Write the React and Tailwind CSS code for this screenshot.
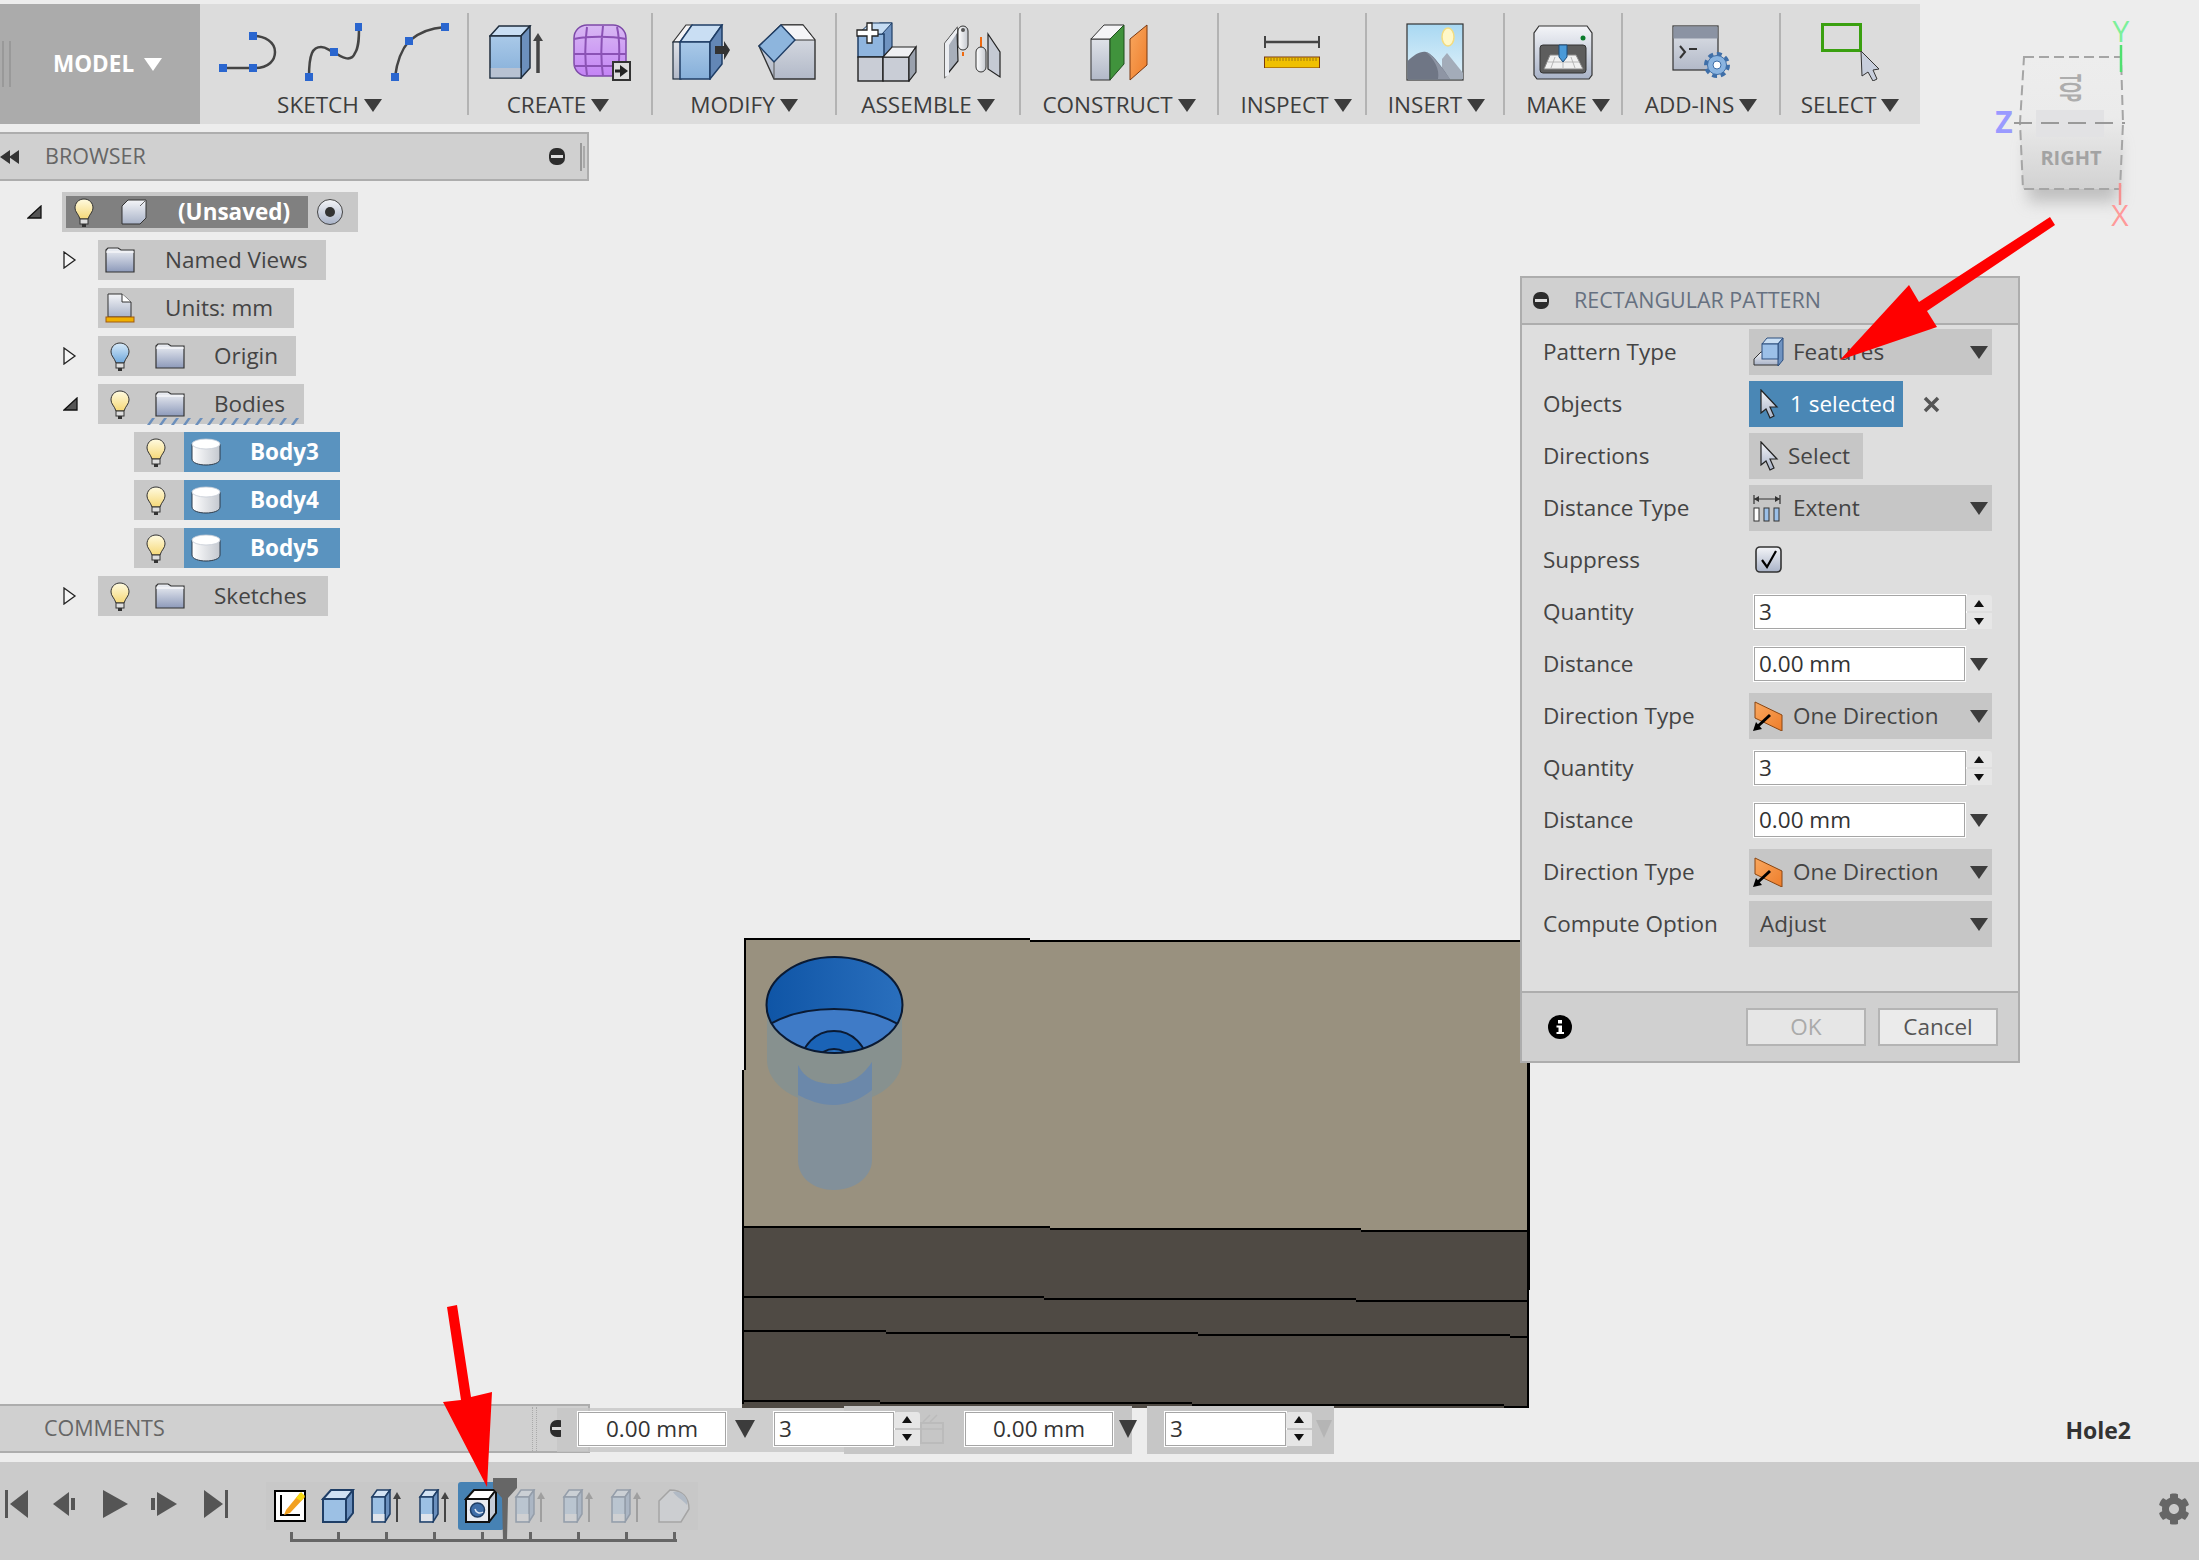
import { FaCog } from 'react-icons/fa';

const Defs = () => (
  <svg width="0" height="0" className="absolute">
    <defs>
      <linearGradient id="bulbY" x1="0" y1="0" x2="0" y2="1"><stop offset="0" stopColor="#fffbe0" /><stop offset="1" stopColor="#f5d878" /></linearGradient>
      <linearGradient id="bulbB" x1="0" y1="0" x2="0" y2="1"><stop offset="0" stopColor="#d8ebfa" /><stop offset="1" stopColor="#6fa8dc" /></linearGradient>
      <linearGradient id="steel" x1="0" y1="0" x2="0" y2="1"><stop offset="0" stopColor="#f4f5f8" /><stop offset="1" stopColor="#a9b3c8" /></linearGradient>
      <linearGradient id="folderG" x1="0" y1="0" x2="0" y2="1"><stop offset="0" stopColor="#eff1f5" /><stop offset="1" stopColor="#8d9aba" /></linearGradient>
      <linearGradient id="steel2" x1="0" y1="0" x2="0" y2="1"><stop offset="0" stopColor="#dfe2e8" /><stop offset="1" stopColor="#b2b9c8" /></linearGradient>
      <linearGradient id="blue" x1="0" y1="0" x2="0" y2="1"><stop offset="0" stopColor="#a9c9e8" /><stop offset="1" stopColor="#86afd9" /></linearGradient>
      <linearGradient id="cyl" x1="0" y1="0" x2="1" y2="0"><stop offset="0" stopColor="#fff" /><stop offset="1" stopColor="#c4c8cf" /></linearGradient>
      <linearGradient id="purple" x1="0" y1="0" x2="0" y2="1"><stop offset="0" stopColor="#d8b8f3" /><stop offset="1" stopColor="#c484f5" /></linearGradient>
      <linearGradient id="orange" x1="0" y1="0" x2="1" y2="1"><stop offset="0" stopColor="#f9a860" /><stop offset="1" stopColor="#ee7d2a" /></linearGradient>
      <linearGradient id="hole" x1="0" y1="0" x2="1" y2="0"><stop offset="0" stopColor="#0f55a6" /><stop offset="1" stopColor="#2a6fbd" /></linearGradient>
      <linearGradient id="cubeFace" x1="0" y1="0" x2="0" y2="1"><stop offset="0" stopColor="#ededed" /><stop offset="0.45" stopColor="#ebebeb" /><stop offset="1" stopColor="#d2d2d2" /></linearGradient>
      <linearGradient id="sky" x1="0" y1="0" x2="0" y2="1"><stop offset="0" stopColor="#a8d8f2" /><stop offset="1" stopColor="#e2f2fa" /></linearGradient>
      <clipPath id="holeClip"><ellipse cx="834.5" cy="1005" rx="68" ry="48" /></clipPath>
    </defs>
  </svg>
);

const Caret = ({ w = 18, h = 13, className = '', fill = '#3c3c3c' }) => (
  <svg width={w} height={h} viewBox="0 0 18 13" preserveAspectRatio="none" className={`shrink-0 ${className}`}>
    <polygon points="0,0 18,0 9,13" fill={fill} />
  </svg>
);

const Handle = ({ x, y }) => <rect x={x - 4} y={y - 4} width="8" height="8" fill="#2a66cf" />;

const SketchLine = () => (
  <svg width="58" height="40" viewBox="0 0 58 40">
    <path d="M4 36H36C50 36 56 28 56 20C56 10 46 4 34 4" fill="none" stroke="#444" strokeWidth="2.5" />
    <Handle x={4} y={36} /><Handle x={34} y={36} /><Handle x={34} y={4} />
  </svg>
);

const SketchSpline = () => (
  <svg width="57" height="58" viewBox="0 0 57 58">
    <path d="M4 54C4 30 8 24 16 24C22 24 24 28 29 29C36 34 46 40 50 30C54 24 54 14 54 4" fill="none" stroke="#444" strokeWidth="2.5" />
    <Handle x={4} y={54} /><Handle x={29} y={29} /><Handle x={54} y={4} />
  </svg>
);

const SketchArc = () => (
  <svg width="59" height="58" viewBox="0 0 59 58">
    <path d="M5 54C7 38 12 26 19 18C28 10 40 5 55 4" fill="none" stroke="#444" strokeWidth="2.5" />
    <Handle x={5} y={54} /><Handle x={19} y={18} /><Handle x={55} y={4} />
  </svg>
);

const Extrude = () => (
  <svg width="56" height="54" viewBox="0 0 56 54">
    <polygon points="1,11 10,1 41,1 32,11" fill="#c9def3" stroke="#1f2d3d" strokeWidth="1.5" />
    <polygon points="32,11 41,1 41,43 32,53" fill="#6c90bd" stroke="#1f2d3d" strokeWidth="1.5" />
    <rect x="1" y="11" width="31" height="42" fill="url(#blue)" stroke="#1f2d3d" strokeWidth="1.5" />
    <rect x="1.8" y="43" width="29.5" height="9.4" fill="#b8c2d2" />
    <path d="M49 48V12" stroke="#444" strokeWidth="3.5" />
    <polygon points="49,8 54,16 44,16" fill="#444" />
  </svg>
);

const Mesh = () => (
  <svg width="58" height="57" viewBox="0 0 58 57">
    <rect x="1" y="1" width="52" height="51" rx="13" fill="url(#purple)" stroke="#7d4aa8" strokeWidth="1.5" />
    <path d="M1 15C14 12 38 12 53 15M1 30H53M1 42H53M14 3C12 18 12 38 14 51M30 2C28 18 28 38 30 52M44 3C47 16 47 38 44 50" fill="none" stroke="#8b52b5" strokeWidth="2" />
    <rect x="40" y="38" width="17" height="18" fill="#ddd" stroke="#333" strokeWidth="2" />
    <path d="M42 47H48" stroke="#222" strokeWidth="3" />
    <polygon points="47,41 55,47 47,53" fill="#222" />
  </svg>
);

const PressPull = () => (
  <svg width="58" height="56" viewBox="0 0 58 56">
    <polygon points="1,18 14,1 20,1 8,18" fill="#f4f4f6" stroke="#333" strokeWidth="1.2" />
    <rect x="1" y="18" width="8" height="37" fill="url(#steel2)" stroke="#1f2d3d" strokeWidth="1.2" />
    <polygon points="8,18 20,1 50,1 38,18" fill="#c9def3" stroke="#1f3e66" strokeWidth="1.5" />
    <rect x="8" y="18" width="30" height="37" fill="url(#blue)" stroke="#1f3e66" strokeWidth="1.5" />
    <polygon points="38,18 50,1 50,40 38,55" fill="#6387b6" stroke="#1f3e66" strokeWidth="1.5" />
    <polygon points="43,22 52,22 52,17 58,26 52,36 52,30 43,30" fill="#333" />
  </svg>
);

const Chamfer = () => (
  <svg width="58" height="57" viewBox="0 0 58 57">
    <polygon points="1,22 16,55 57,55 57,16 45,1 23,1" fill="url(#steel2)" stroke="#333" strokeWidth="1.4" />
    <polygon points="23,1 45,1 57,16 37,16" fill="#f5f5f7" stroke="#333" strokeWidth="1" />
    <polygon points="1,22 23,1 37,16 16,38" fill="#8db5dd" stroke="#1f3e66" strokeWidth="1.4" />
    <path d="M16 38V55" stroke="#555" strokeWidth="1" />
  </svg>
);

const NewComp = () => (
  <svg width="61" height="60" viewBox="0 0 61 60">
    <polygon points="24,1 36,1 36,40 24,40" fill="#6f93c1" stroke="#1f3e66" strokeWidth="1.2" />
    <rect x="2" y="12" width="26" height="23" fill="#8fb5df" stroke="#1f3e66" strokeWidth="1.5" />
    <polygon points="2,12 14,1 36,1 26,12" fill="#c5dcf3" stroke="#1f3e66" strokeWidth="1" />
    <rect x="2" y="35" width="25" height="24" fill="#c9cdd6" stroke="#222" strokeWidth="1.4" />
    <rect x="27" y="35" width="26" height="24" fill="#c9cdd6" stroke="#222" strokeWidth="1.4" />
    <polygon points="27,35 36,25 60,25 53,35" fill="#eff0f3" stroke="#222" strokeWidth="1.2" />
    <polygon points="53,35 60,25 60,50 53,59" fill="#9aa1ad" stroke="#222" strokeWidth="1.2" />
    <path d="M11 1H16V8H22V14H16V21H11V14H1V8H11Z" fill="#fff" stroke="#222" strokeWidth="1.3" />
  </svg>
);

const Joint = () => (
  <svg width="57" height="54" viewBox="0 0 57 54">
    <polygon points="1,18 13,3 14,36 1,52" fill="#a8afba" stroke="#222" strokeWidth="1.2" />
    <polygon points="1,18 13,3 13,8 5,20 5,50 1,52" fill="#eceef2" />
    <rect x="14" y="1" width="10" height="24" rx="5" fill="url(#cyl)" stroke="#333" strokeWidth="1" />
    <circle cx="19" cy="5" r="2" fill="#555" />
    <path d="M19 27V31" stroke="#ef6a10" strokeWidth="2" />
    <path d="M37 12V23" stroke="#ef6a10" strokeWidth="2" />
    <rect x="32" y="22" width="10" height="25" rx="5" fill="url(#cyl)" stroke="#333" strokeWidth="1" />
    <polygon points="44,9 56,27 56,52 44,44" fill="#c5cad4" stroke="#222" strokeWidth="1.2" />
  </svg>
);

const Plane = () => (
  <svg width="58" height="57" viewBox="0 0 58 57">
    <rect x="1" y="15" width="19" height="41" fill="url(#steel2)" stroke="#333" strokeWidth="1" />
    <polygon points="1,15 14,1 34,1 20,15" fill="#f5f5f7" stroke="#333" strokeWidth="1" />
    <polygon points="20,15 34,1 34,40 20,56" fill="#40933c" stroke="#1f4d1d" strokeWidth="1" />
    <polygon points="40,15 57,1 57,41 40,56" fill="url(#orange)" stroke="#7a3810" strokeWidth="1" />
  </svg>
);

const Ruler = () => {
  const ticks = Array.from({ length: 17 }, (_, i) => i);
  return (
    <svg width="56" height="32" viewBox="0 0 56 32">
      <path d="M1 6H55" stroke="#444" strokeWidth="2.5" />
      <path d="M1 0V12M55 0V12" stroke="#444" strokeWidth="2" />
      <rect x="0.5" y="21" width="55" height="11" fill="#f0c000" stroke="#7a3a10" strokeWidth="1" />
      {ticks.map((i) => <path key={i} d={`M${4 + i * 3} 22V25`} stroke="#8a6410" strokeWidth="0.8" />)}
    </svg>
  );
};

const Picture = () => (
  <svg width="58" height="58" viewBox="0 0 58 58">
    <rect x="1" y="1" width="56" height="56" fill="url(#sky)" stroke="#333" strokeWidth="1.2" />
    <ellipse cx="42" cy="14" rx="6" ry="9" fill="#fff8c8" stroke="#f3dc80" strokeWidth="1.5" />
    <polygon points="36,56 36,36 41,30 57,50 57,56" fill="#a3acb9" />
    <path d="M1.6 56.4V38C8 32 14 28 20 29C26 30 36 44 44 56.4Z" fill="#6f7685" />
    <path d="M20 29C24 30 36 44 44 56H32C34 46 28 36 20 29Z" fill="#8e95a4" />
  </svg>
);

const Printer = () => (
  <svg width="60" height="55" viewBox="0 0 60 55">
    <path d="M6 1H54L59 8V50L56 54H4L1 50V8Z" fill="url(#steel)" stroke="#333" strokeWidth="1.2" />
    <circle cx="50" cy="13" r="2.5" fill="#0a7a2a" />
    <rect x="7" y="20" width="46" height="28" rx="3" fill="#5d5d5d" stroke="#333" />
    <polygon points="17,30 43,30 50,44 11,44" fill="#f0f0f0" stroke="#888" />
    <path d="M22 32L18 43M30 32V43M38 32L42 43M15 37H46" stroke="#aaa" strokeWidth="0.8" />
    <polygon points="26,20 34,20 34,32 30,37 26,32" fill="#4a9ad8" stroke="#1d4d7a" />
  </svg>
);

const AddIn = () => (
  <svg width="59" height="54" viewBox="0 0 59 54">
    <rect x="1" y="1" width="45" height="44" fill="url(#steel2)" stroke="#333" strokeWidth="1.2" />
    <rect x="1.5" y="1.5" width="44" height="12" fill="#8b93a3" />
    <path d="M8 21L13 27L8 33" fill="none" stroke="#333" strokeWidth="2" />
    <path d="M17 24H25" stroke="#333" strokeWidth="2" />
    <circle cx="45" cy="40" r="9" fill="none" stroke="#3f6fa8" strokeWidth="8" strokeDasharray="4 3" />
    <circle cx="45" cy="40" r="9.5" fill="#8ab4e0" stroke="#3f6fa8" strokeWidth="1" />
    <circle cx="45" cy="40" r="4" fill="#fff" stroke="#3f6fa8" strokeWidth="1" />
  </svg>
);

const SelectBox = () => (
  <svg width="59" height="58" viewBox="0 0 59 58">
    <rect x="1.5" y="1.5" width="38" height="26" fill="none" stroke="#3aa010" strokeWidth="3" />
    <polygon points="40,28 58,46 52,47 56,56 52,58 47,49 41,53" fill="#c7cedc" stroke="#333" strokeWidth="1" />
  </svg>
);

const Pointer = () => (
  <svg width="20" height="30" viewBox="0 0 20 30" className="shrink-0">
    <polygon points="2,1 18,18 11,18 15,27 11,29 7,20 2,24" fill="url(#steel)" stroke="#222" strokeWidth="1.2" />
  </svg>
);

const Bulb = ({ color = 'bulbY' }) => (
  <svg width="20" height="29" viewBox="0 0 20 29" className="shrink-0">
    <path d="M10 1C4.5 1 1 5 1 10C1 14 4.5 16 6 21H14C15.5 16 19 14 19 10C19 5 15.5 1 10 1Z" fill={`url(#${color})`} stroke="#333" strokeWidth="1" />
    <rect x="6" y="21" width="8" height="5" fill="#ddd" stroke="#333" strokeWidth="1" />
    <rect x="8" y="26" width="4" height="3" fill="#333" />
  </svg>
);

const Folder = () => (
  <svg width="30" height="26" viewBox="0 0 30 26" className="shrink-0">
    <path d="M1 3L3 1H13L16 3H29V25H1Z" fill="url(#folderG)" stroke="#333" strokeWidth="1.2" />
    <path d="M1 5H29" stroke="#fff" strokeWidth="1" />
  </svg>
);

const Doc = () => (
  <svg width="30" height="30" viewBox="0 0 30 30" className="shrink-0">
    <path d="M3 1H17L26 9V24H3Z" fill="url(#steel)" stroke="#333" strokeWidth="1" />
    <path d="M17 1V9H26" fill="#fff" stroke="#333" strokeWidth="1" />
    <rect x="1" y="24" width="28" height="5" fill="#f0b000" stroke="#a05a10" strokeWidth="1" />
  </svg>
);

const TreeCube = () => (
  <svg width="26" height="26" viewBox="0 0 26 26" className="shrink-0">
    <path d="M1 7L7 1H25V19L19 25H1Z" fill="url(#steel)" stroke="#333" strokeWidth="1" />
    <path d="M19 7L25 1" fill="none" stroke="#666" strokeWidth="1" />
  </svg>
);

const Cylinder = () => (
  <svg width="30" height="28" viewBox="0 0 30 28" className="shrink-0">
    <path d="M1 6V21C1 25 8 27 15 27C22 27 29 25 29 21V6Z" fill="url(#cyl)" stroke="#2c3a4a" strokeWidth="1" />
    <ellipse cx="15" cy="6" rx="14" ry="5" fill="#fff" stroke="#c5ccd6" strokeWidth="0.8" />
  </svg>
);

const TriOpen = () => (
  <svg width="14" height="18" viewBox="0 0 14 18" className="shrink-0">
    <polygon points="1,1 12,9 1,17" fill="#f6f6f6" stroke="#222" strokeWidth="1.3" />
  </svg>
);

const TriDown = () => (
  <svg width="15" height="14" viewBox="0 0 15 14" className="shrink-0">
    <polygon points="14,1 14,13 1,13" fill="#555" stroke="#111" strokeWidth="1.3" />
  </svg>
);

const MinusDot = () => (
  <svg width="16" height="17" viewBox="0 0 16 17" className="shrink-0">
    <rect width="16" height="17" rx="7" fill="#2c2c2c" />
    <rect x="2" y="7" width="12" height="3" fill="#ddd" />
  </svg>
);

const FeatureIcon = () => (
  <svg width="31" height="30" viewBox="0 0 31 30" className="shrink-0">
    <polygon points="1,28 1,22 8,15 26,15 26,28" fill="url(#steel)" stroke="#333" strokeWidth="1" />
    <polygon points="9,7 14,1 30,1 25,7" fill="#c9def3" stroke="#2d4f7f" strokeWidth="1" />
    <polygon points="25,7 30,1 30,23 25,29" fill="#6f93c1" stroke="#2d4f7f" strokeWidth="1" />
    <rect x="9" y="7" width="16" height="15" fill="#9cc0e8" stroke="#2d4f7f" strokeWidth="1" />
  </svg>
);

const ExtentIcon = () => (
  <svg width="28" height="28" viewBox="0 0 28 28" className="shrink-0">
    <path d="M1 1V10M27 1V10M1 5H27" stroke="#333" strokeWidth="1.2" fill="none" />
    <polygon points="1,5 6,2 6,8" fill="#333" /><polygon points="27,5 22,2 22,8" fill="#333" />
    <rect x="1" y="14" width="5" height="13" fill="#fff" stroke="#333" />
    <rect x="11" y="14" width="5" height="13" fill="#9cc0e8" stroke="#333" />
    <rect x="21" y="14" width="5" height="13" fill="#9cc0e8" stroke="#333" />
  </svg>
);

const DirectionIcon = () => (
  <svg width="30" height="30" viewBox="0 0 30 30" className="shrink-0">
    <polygon points="2,1 29,14 29,30 2,17" fill="url(#orange)" stroke="#8a4510" strokeWidth="1" />
    <path d="M17 14L4 26" stroke="#000" strokeWidth="3" />
    <polygon points="0,30 3,21 9,28" fill="#000" />
  </svg>
);

const Check = () => (
  <svg width="27" height="28" viewBox="0 0 27 28" className="shrink-0">
    <rect x="1" y="1" width="25" height="25" rx="4" fill="url(#steel)" stroke="#333" strokeWidth="1.6" />
    <path d="M7 14L12 21L21 5" fill="none" stroke="#000" strokeWidth="2.2" />
  </svg>
);

const Info = () => (
  <svg width="24" height="24" viewBox="0 0 24 24" className="shrink-0">
    <circle cx="12" cy="12" r="12" fill="#000" />
    <rect x="10" y="5" width="4" height="3.5" fill="#fff" />
    <path d="M8.5 10.5H14V17H16V19H8.5V17H10.5V12.5H8.5Z" fill="#fff" />
  </svg>
);

const CloseX = () => (
  <svg width="17" height="17" viewBox="0 0 17 17" className="ml-[20px] shrink-0">
    <path d="M2 2L15 15M15 2L2 15" stroke="#555" strokeWidth="3.5" />
  </svg>
);

const NumInput = ({ value, w, center }) => (
  <div className={`flex h-[34px] shrink-0 items-center border border-[#a5a5a5] bg-white px-[4px] text-[#333] outline outline-1 outline-white ${w} ${center ? 'justify-center' : ''}`}>
    {value}
  </div>
);

const Stepper = () => (
  <div className="flex h-[34px] w-[26px] shrink-0 flex-col gap-[2px]">
    <div className="flex flex-1 items-center justify-center rounded-t-[3px] bg-[#e6e6e6]"><Caret w={10} h={7} className="rotate-180" fill="#111" /></div>
    <div className="flex flex-1 items-center justify-center bg-[#e6e6e6]"><Caret w={10} h={7} fill="#111" /></div>
  </div>
);

const Dropdown = ({ icon, children }) => (
  <div className="flex h-[46px] w-[243px] items-center bg-[#c6c6c6] px-[4px]">
    <div className="flex w-[40px] shrink-0 items-center justify-start">{icon}</div>
    <span className="flex-1 text-[#444]">{children}</span>
    <Caret />
  </div>
);

const groups = [
  { label: 'SKETCH', w: 'w-[267px]', gap: 'gap-[28px]', icons: [<SketchLine key="a" />, <SketchSpline key="b" />, <SketchArc key="c" />], shift: 'mr-[8px]' },
  { label: 'CREATE', w: 'w-[182px]', gap: 'gap-[28px]', icons: [<Extrude key="a" />, <Mesh key="b" />], shift: 'mr-[4px]' },
  { label: 'MODIFY', w: 'w-[182px]', gap: 'gap-[28px]', icons: [<PressPull key="a" />, <Chamfer key="b" />] },
  { label: 'ASSEMBLE', w: 'w-[182px]', gap: 'gap-[27px]', icons: [<NewComp key="a" />, <Joint key="b" />] },
  { label: 'CONSTRUCT', w: 'w-[196px]', gap: 'gap-0', icons: [<Plane key="a" />] },
  { label: 'INSPECT', w: 'w-[146px]', gap: 'gap-0', icons: [<Ruler key="a" />], shift: 'ml-[8px]' },
  { label: 'INSERT', w: 'w-[136px]', gap: 'gap-0', icons: [<Picture key="a" />], shift: 'ml-[3px]' },
  { label: 'MAKE', w: 'w-[116px]', gap: 'gap-0', icons: [<Printer key="a" />], shift: 'ml-[10px]' },
  { label: 'ADD-INS', w: 'w-[156px]', gap: 'gap-0', icons: [<AddIn key="a" />] },
  { label: 'SELECT', w: 'w-[138px]', gap: 'gap-0', icons: [<SelectBox key="a" />], last: true },
];

function Toolbar() {
  return (
    <div className="mt-[4px] flex h-[120px] w-[1920px] bg-[#dcdcdc]">
      <div className="flex h-full w-[200px] shrink-0 items-center bg-[#ababab]">
        <div className="ml-[2px] flex gap-[5px]">
          <div className="h-[46px] w-[2px] bg-[#999]" />
          <div className="h-[46px] w-[2px] bg-[#999]" />
        </div>
        <span className="ml-[42px] text-[22.5px] font-bold text-white">MODEL</span>
        <Caret className="ml-[10px]" fill="#fff" />
      </div>
      {groups.map((g) => (
        <div key={g.label} className="flex">
          <div className={`flex flex-col items-center pt-[17px] ${g.w}`}>
            <div className={`flex h-[62px] items-center justify-center ${g.gap}`}>{g.icons}</div>
            <div className={`mt-[7px] flex h-[30px] items-center gap-[5px] text-[22.5px] text-[#3d3d3d] ${g.shift || ''}`}>
              {g.label}
              <Caret />
            </div>
          </div>
          {!g.last && <div className="h-[102px] w-[2px] self-center bg-[#b3b3b3]" />}
        </div>
      ))}
    </div>
  );
}

function BrowserHeader() {
  return (
    <div className="mt-[8px] flex h-[49px] w-[589px] items-center border-y-2 border-r-2 border-[#adadad] bg-[#d0d0d0] text-[#666]">
      <svg width="20" height="14" viewBox="0 0 20 14" className="shrink-0">
        <polygon points="0,7 10,0 10,14" fill="#333" /><polygon points="9,7 19,0 19,14" fill="#333" />
      </svg>
      <span className="ml-[25px] text-[21.5px]">BROWSER</span>
      <div className="ml-auto flex items-center gap-[15px] pr-[2px]">
        <MinusDot />
        <div className="flex gap-[1px]">
          <div className="h-[28px] w-[2px] bg-[#999]" />
          <div className="h-[22px] w-[2px] self-center bg-[#aaa]" />
        </div>
      </div>
    </div>
  );
}

function TreeRow({ open, bulb, icon, label, w, textMl, pad }) {
  return (
    <div className="flex h-10 items-center">
      <div className="flex w-[98px] shrink-0 justify-start pl-[63px]">
        {open === true && <TriDown />}
        {open === false && <TriOpen />}
      </div>
      <div className={`relative flex h-full items-center bg-[#c8c8c8] ${w} ${pad}`}>
        {bulb && <div className="mr-[25px]"><Bulb color={bulb} /></div>}
        {icon}
        <span className={`text-[22.5px] text-[#444] ${textMl}`}>{label}</span>
        {label === 'Bodies' && (
          <svg width="152" height="8" viewBox="0 0 152 8" className="absolute left-[49px] top-[33px]">
            {Array.from({ length: 13 }, (_, i) => (
              <polygon key={i} points={`${i * 12},8 ${i * 12 + 5},1 ${i * 12 + 8},1 ${i * 12 + 3},8`} fill="#6b8fbc" />
            ))}
          </svg>
        )}
      </div>
    </div>
  );
}

function BodyRow({ label }) {
  return (
    <div className="ml-[134px] flex h-10 w-[206px] items-center">
      <div className="flex h-full w-[50px] shrink-0 items-center bg-[#c8c8c8] pl-[12px]"><Bulb /></div>
      <div className="flex h-full flex-1 items-center bg-[#5a93bf] pl-[7px] text-[22.5px] font-bold text-white">
        <Cylinder />
        <span className="ml-[29px]">{label}</span>
      </div>
    </div>
  );
}

function Tree() {
  return (
    <div className="mt-[11px] flex flex-col gap-2">
      <div className="flex h-10 items-center">
        <div className="flex w-[62px] shrink-0 pl-[27px]"><TriDown /></div>
        <div className="flex h-full w-[296px] items-center bg-[#c8c8c8] pl-[4px]">
          <div className="flex h-[32px] w-[242px] items-center bg-[#808080] pl-[8px] text-[22.5px] font-bold text-white">
            <Bulb />
            <div className="ml-[27px]"><TreeCube /></div>
            <span className="ml-[31px]">(Unsaved)</span>
          </div>
          <svg width="26" height="26" viewBox="0 0 26 26" className="ml-[9px] shrink-0">
            <circle cx="13" cy="13" r="12.5" fill="url(#steel)" stroke="#444" strokeWidth="1" />
            <circle cx="13" cy="13" r="5" fill="#333" />
          </svg>
        </div>
      </div>
      <TreeRow open={false} icon={<Folder />} label="Named Views" w="w-[228px]" pad="pl-[7px]" textMl="ml-[30px]" />
      <TreeRow icon={<Doc />} label="Units: mm" w="w-[196px]" pad="pl-[7px]" textMl="ml-[30px]" />
      <TreeRow open={false} bulb="bulbB" icon={<Folder />} label="Origin" w="w-[198px]" pad="pl-[12px]" textMl="ml-[29px]" />
      <TreeRow open bulb="bulbY" icon={<Folder />} label="Bodies" w="w-[206px]" pad="pl-[12px]" textMl="ml-[29px]" />
      <BodyRow label="Body3" />
      <BodyRow label="Body4" />
      <BodyRow label="Body5" />
      <TreeRow open={false} bulb="bulbY" icon={<Folder />} label="Sketches" w="w-[230px]" pad="pl-[12px]" textMl="ml-[29px]" />
    </div>
  );
}

const DlgRow = ({ label, children }) => (
  <div className="mb-[6px] flex h-[46px] items-center">
    <span className="w-[227px] shrink-0 pl-[21px] text-[#444]">{label}</span>
    {children}
  </div>
);

const QtyField = () => (
  <div className="ml-[5px] flex items-center">
    <NumInput value="3" w="w-[212px]" />
    <Stepper />
  </div>
);

const DistField = () => (
  <div className="ml-[5px] flex items-center">
    <NumInput value="0.00 mm" w="w-[211px]" />
    <Caret className="ml-[5px]" />
  </div>
);

function PatternDialog() {
  return (
    <div className="absolute left-[1520px] top-[276px] z-10 flex h-[787px] w-[500px] flex-col border-2 border-[#adadad] bg-[#dedede] text-[22.5px]">
      <div className="flex h-[47px] shrink-0 items-center border-b-2 border-[#adadad] bg-[#d0d0d0] pl-[11px]">
        <MinusDot />
        <span className="ml-[25px] text-[21.5px] text-[#667080]">RECTANGULAR PATTERN</span>
      </div>
      <div className="flex-1 pt-[4px]">
        <DlgRow label="Pattern Type"><Dropdown icon={<FeatureIcon />}>Features</Dropdown></DlgRow>
        <DlgRow label="Objects">
          <div className="flex h-[46px] w-[154px] items-center bg-[#4a87b5] pl-[10px] text-white">
            <Pointer />
            <span className="ml-[11px]">1 selected</span>
          </div>
          <CloseX />
        </DlgRow>
        <DlgRow label="Directions">
          <div className="flex h-[46px] w-[114px] items-center bg-[#c6c6c6] pl-[10px] text-[#444]">
            <Pointer />
            <span className="ml-[9px]">Select</span>
          </div>
        </DlgRow>
        <DlgRow label="Distance Type"><Dropdown icon={<ExtentIcon />}>Extent</Dropdown></DlgRow>
        <DlgRow label="Suppress"><div className="ml-[6px]"><Check /></div></DlgRow>
        <DlgRow label="Quantity"><QtyField /></DlgRow>
        <DlgRow label="Distance"><DistField /></DlgRow>
        <DlgRow label="Direction Type"><Dropdown icon={<DirectionIcon />}>One Direction</Dropdown></DlgRow>
        <DlgRow label="Quantity"><QtyField /></DlgRow>
        <DlgRow label="Distance"><DistField /></DlgRow>
        <DlgRow label="Direction Type"><Dropdown icon={<DirectionIcon />}>One Direction</Dropdown></DlgRow>
        <DlgRow label="Compute Option">
          <div className="flex h-[46px] w-[243px] items-center bg-[#c6c6c6] pl-[11px] pr-[4px] text-[#444]">
            <span className="flex-1">Adjust</span>
            <Caret />
          </div>
        </DlgRow>
      </div>
      <div className="flex h-[70px] shrink-0 items-center border-t-2 border-[#adadad] bg-[#d0d0d0] pl-[26px] pr-[20px]">
        <Info />
        <div className="ml-auto flex gap-[12px]">
          <div className="flex h-[38px] w-[120px] items-center justify-center border-2 border-[#b4b4b4] bg-[#e6e6e6] text-[#aaa]">OK</div>
          <div className="flex h-[38px] w-[120px] items-center justify-center border-2 border-[#b4b4b4] bg-[#ebebeb] text-[#555]">Cancel</div>
        </div>
      </div>
    </div>
  );
}

function Model() {
  return (
    <svg width="2199" height="1560" viewBox="0 0 2199 1560" className="absolute left-0 top-0" shapeRendering="crispEdges">
      <polygon points="744,939 1030,939 1030,941 1528,941 1528,1408 742,1408 742,1070 744,1070" fill="#4f4a44" />
      <polygon points="744,939 1030,939 1030,941 1528,941 1528,1231 1361,1231 1361,1229 1050,1229 1050,1227 744,1227" fill="#99917f" />
      <g fill="#000">
        <rect x="744" y="938" width="286" height="2" /><rect x="1030" y="940" width="490" height="2" />
        <rect x="744" y="938" width="2" height="132" /><rect x="742" y="1070" width="2" height="334" />
        <rect x="1527" y="1060" width="3" height="230" /><rect x="1527" y="1290" width="2" height="118" />
        <rect x="744" y="1226" width="306" height="2" /><rect x="1050" y="1228" width="311" height="2" /><rect x="1361" y="1230" width="167" height="2" />
        <rect x="744" y="1296" width="300" height="2" /><rect x="1044" y="1298" width="312" height="2" /><rect x="1356" y="1300" width="172" height="2" />
        <rect x="744" y="1330" width="142" height="2" /><rect x="886" y="1332" width="312" height="2" /><rect x="1198" y="1334" width="312" height="2" /><rect x="1510" y="1336" width="18" height="2" />
        <rect x="742" y="1400" width="138" height="2" /><rect x="880" y="1402" width="312" height="2" /><rect x="1192" y="1404" width="312" height="2" /><rect x="1504" y="1406" width="24" height="2" />
      </g>
      <g shapeRendering="auto">
        <path d="M767 1005V1060C767 1085 797 1105 834 1105C871 1105 902 1085 902 1060V1005Z" fill="#87918f" />
        <path d="M798 1065V1160C798 1178 814 1190 834 1190C856 1190 872 1176 872 1160V1062C860 1080 848 1084 834 1084C816 1084 804 1078 798 1065Z" fill="#82909a" />
        <path d="M798 1065C804 1078 816 1084 834 1084C848 1084 860 1080 872 1062V1090C860 1100 846 1105 834 1105C820 1105 808 1100 798 1095Z" fill="#6b88aa" />
        <ellipse cx="834.5" cy="1005" rx="68" ry="48" fill="url(#hole)" />
        <g clipPath="url(#holeClip)">
          <ellipse cx="834" cy="1060" rx="90" ry="51" fill="#3f7bc7" stroke="#0a1a33" strokeWidth="2" />
          <ellipse cx="834" cy="1064" rx="33" ry="33" fill="#1a63b6" stroke="#0a1a33" strokeWidth="2" />
          <ellipse cx="834" cy="1058" rx="14" ry="9" fill="#2c74c4" stroke="#0a1a33" strokeWidth="2" />
        </g>
        <ellipse cx="834.5" cy="1005" rx="68" ry="48" fill="none" stroke="#0a1a33" strokeWidth="2" />
      </g>
    </svg>
  );
}

function ViewCube() {
  return (
    <svg width="190" height="225" viewBox="1990 10 190 225" className="absolute left-[1990px] top-[10px]">
      <defs>
        <filter id="cubeShadow" x="-30%" y="-30%" width="160%" height="160%"><feGaussianBlur stdDeviation="8" /></filter>
      </defs>
      <rect x="2028" y="140" width="90" height="62" fill="#9a9a9a" opacity="0.55" filter="url(#cubeShadow)" />
      <polygon points="2024,57 2121,57 2123,123 2120,189 2023,189 2020,123" fill="url(#cubeFace)" />
      <rect x="2036" y="110" width="68" height="27" fill="#e2e2e4" />
      <polygon points="2024,57 2121,57 2123,123 2120,189 2023,189 2020,123" fill="none" stroke="#a5a5a5" strokeWidth="2" strokeDasharray="10 5" />
      <path d="M2014 123H2125" stroke="#999" strokeWidth="2" strokeDasharray="18 9" />
      <text x="2071" y="165" textAnchor="middle" fontFamily="Open Sans" fontWeight="700" fontSize="20" fill="#a3a3a3">RIGHT</text>
      <text transform="translate(2060 88) rotate(90) scale(0.7 1.45)" textAnchor="middle" fontFamily="Open Sans" fontWeight="700" fontSize="20" fill="#adadad">TOP</text>
      <path d="M2121 45V72" stroke="#50e070" strokeWidth="2.5" />
      <text x="2121" y="42" textAnchor="middle" fontFamily="Open Sans" fontSize="30" fill="#7cf09a">Y</text>
      <text x="2004" y="133" textAnchor="middle" fontFamily="Open Sans" fontWeight="700" fontSize="30" fill="#9a9aff">Z</text>
      <path d="M2120 183V205" stroke="#f59090" strokeWidth="2.5" />
      <text x="2120" y="226" textAnchor="middle" fontFamily="Open Sans" fontSize="30" fill="#ff9a9a">X</text>
    </svg>
  );
}

function Arrows() {
  return (
    <svg width="2199" height="1560" viewBox="0 0 2199 1560" className="pointer-events-none absolute left-0 top-0 z-20">
      <polygon points="2050,217 2055,225 1927,311 1937,327 1840,360 1909,285 1919,302" fill="#ff0000" />
      <polygon points="447,1307 457,1305 471,1397 492,1392 487,1487 443,1402 461,1400" fill="#ff0000" />
    </svg>
  );
}

function Comments() {
  return (
    <div className="relative z-10 flex h-[58px] items-start text-[22.5px]">
      <div className="flex h-[49px] w-[590px] shrink-0 items-center border-y-2 border-r-2 border-[#adadad] bg-[#d0d0d0] pl-[44px] text-[21.5px] text-[#666]">
        <span className="w-[488px]">COMMENTS</span>
        <div className="h-[44px] w-[5px] border-x border-dotted border-[#aaa]" />
      </div>
      <div className="relative -ml-[33px] flex h-[48px] w-[777px] shrink-0 items-center pl-[21px] pt-[1px]">
        <div className="absolute left-0 top-[4px] h-[44px] w-[287px] bg-[#c6c6c6]/80" />
        <div className="absolute left-[287px] top-[2px] h-[48px] w-[288px] bg-[#c6c6c6]" />
        <div className="absolute left-[590px] top-[2px] h-[48px] w-[187px] bg-[#c6c6c6]" />
        <div className="absolute -left-[7px] top-[16px] w-[11px] overflow-hidden"><MinusDot /></div>
        <div className="relative flex items-center">
          <NumInput value="0.00 mm" w="w-[148px]" center />
          <Caret className="ml-[9px]" w={20} h={18} />
          <div className="ml-[19px] flex items-center">
            <NumInput value="3" w="w-[120px]" />
            <Stepper />
          </div>
          <svg width="24" height="30" viewBox="0 0 24 30" className="shrink-0 opacity-60">
            <rect x="1" y="9" width="22" height="20" fill="none" stroke="#b4b4b4" strokeWidth="2" />
            <path d="M1 15H23M3 8L10 1M10 8L17 1" stroke="#b4b4b4" strokeWidth="1.5" />
          </svg>
          <div className="ml-[21px]"><NumInput value="0.00 mm" w="w-[148px]" center /></div>
          <Caret className="ml-[6px]" w={18} h={18} />
          <div className="ml-[28px] flex items-center">
            <NumInput value="3" w="w-[121px]" />
            <Stepper />
          </div>
          <Caret className="ml-[4px]" w={16} h={18} fill="#b5b5b5" />
        </div>
      </div>
      <span className="ml-auto mt-[9px] pr-[68px] text-[23px] font-bold text-[#333]">Hole2</span>
    </div>
  );
}

const TlCube = ({ children }) => (
  <svg width="34" height="34" viewBox="0 0 34 34">{children}</svg>
);

const TlExtrude = ({ faded }) => (
  <svg width="32" height="34" viewBox="0 0 32 34" className={faded ? 'opacity-30' : ''}>
    <polygon points="2,8 7,1 20,1 15,8" fill="#d4e3f3" stroke="#1f3e66" strokeWidth="1.5" />
    <polygon points="15,8 20,1 20,25 15,33" fill="#6a8fbd" stroke="#1f3e66" strokeWidth="1.5" />
    <rect x="2" y="8" width="13" height="25" fill="#9cc0e4" stroke="#1f3e66" strokeWidth="1.5" />
    <rect x="3" y="25" width="11.5" height="7" fill="#dfe3ea" />
    <path d="M27 33V7" stroke="#444" strokeWidth="2" />
    <polygon points="27,3 31,10 23,10" fill="#444" />
  </svg>
);

function Timeline() {
  const ticks = [25, 72, 120, 168, 216, 264, 312, 360, 408];
  return (
    <div className="flex h-[98px] items-start bg-[#cbcbcb] pt-[20px]">
      <svg width="223" height="28" viewBox="0 0 223 28" className="ml-[5px] mt-[8px] shrink-0">
        <g fill="#555">
          <rect x="0" y="0" width="3" height="28" /><polygon points="5,14 23,0 23,28" />
          <polygon points="48,14 64,2 64,26" /><rect x="66" y="8" width="4" height="12" />
          <polygon points="98,0 123,14 98,28" />
          <rect x="146" y="8" width="4" height="12" /><polygon points="152,2 172,14 152,26" />
          <polygon points="199,0 218,14 199,28" /><rect x="220" y="0" width="3" height="28" />
        </g>
      </svg>
      <div className="ml-[38px] flex flex-col">
        <div className="relative flex h-[48px] w-[432px] bg-[#c8c8c8]">
          <div className="flex w-[48px] items-center justify-center">
            <svg width="32" height="32" viewBox="0 0 32 32">
              <rect x="1" y="1" width="30" height="30" fill="#fff" stroke="#000" strokeWidth="2" />
              <path d="M7 5V25H26" fill="none" stroke="#000" strokeWidth="2" />
              <polygon points="12,20 26,3 31,7 16,23 10,25" fill="#f2a020" />
              <polygon points="22,8 27,2 31,6 27,11" fill="#f6d810" />
            </svg>
          </div>
          <div className="flex w-[48px] items-center justify-center">
            <TlCube>
              <polygon points="2,10 10,1 32,1 25,10" fill="#d0e1f3" stroke="#1f3e66" strokeWidth="2" />
              <polygon points="25,10 32,1 32,24 25,33" fill="#6a8fbd" stroke="#1f3e66" strokeWidth="2" />
              <rect x="2" y="10" width="23" height="23" fill="#9cc0e4" stroke="#1f3e66" strokeWidth="2" />
            </TlCube>
          </div>
          <div className="flex w-[48px] items-center justify-center"><TlExtrude /></div>
          <div className="flex w-[48px] items-center justify-center"><TlExtrude /></div>
          <div className="flex w-[46px] items-center justify-center rounded-[3px] bg-[#4682b4]">
            <TlCube>
              <polygon points="2,10 10,1 32,1 25,10" fill="#fff" stroke="#111" strokeWidth="2" />
              <polygon points="25,10 32,1 32,24 25,33" fill="#c5ccd8" stroke="#111" strokeWidth="2" />
              <rect x="2" y="10" width="23" height="23" fill="#e8ebf1" stroke="#111" strokeWidth="2" />
              <circle cx="13.5" cy="21" r="7" fill="#3f6ea8" stroke="#1f3e66" strokeWidth="1.5" />
              <path d="M11 20C12 24 16 25 19 23" fill="none" stroke="#dfe8f3" strokeWidth="1.5" />
            </TlCube>
          </div>
          <div className="ml-[2px] flex w-[48px] items-center justify-center"><TlExtrude faded /></div>
          <div className="flex w-[48px] items-center justify-center"><TlExtrude faded /></div>
          <div className="flex w-[48px] items-center justify-center"><TlExtrude faded /></div>
          <div className="flex w-[48px] items-center justify-center">
            <svg width="32" height="34" viewBox="0 0 32 34" className="opacity-30">
              <path d="M1 12L12 1C24 1 31 8 31 20L23 33H1Z" fill="#d8dde6" stroke="#555" strokeWidth="1.5" />
              <path d="M15 3C18 8 24 10 29 16C31 10 24 1 15 3Z" fill="#7f9bc0" />
            </svg>
          </div>
          <svg width="24" height="62" viewBox="0 0 24 62" className="absolute left-[227px] -top-[4px]">
            <polygon points="0,0 24,0 24,10 15,20 14,62 10,62 9,20 0,10" fill="#666" />
          </svg>
        </div>
        <svg width="432" height="14" viewBox="0 0 432 14" shapeRendering="crispEdges">
          {ticks.map((x) => <rect key={x} x={x - 1} y="2" width="3" height="10" fill="#666" />)}
          <rect x="24" y="9" width="387" height="3" fill="#666" />
        </svg>
      </div>
      <FaCog className="ml-auto mr-[9px] mt-[11px] h-[32px] w-[32px] text-[#666]" />
    </div>
  );
}

export default function App() {
  return (
    <div className="relative flex h-[1560px] w-[2199px] flex-col overflow-hidden bg-[#ededed] font-['Open_Sans',sans-serif]">
      <Defs />
      <Model />
      <ViewCube />
      <Toolbar />
      <BrowserHeader />
      <Tree />
      <div className="mt-auto">
        <Comments />
        <Timeline />
      </div>
      <PatternDialog />
      <Arrows />
    </div>
  );
}
